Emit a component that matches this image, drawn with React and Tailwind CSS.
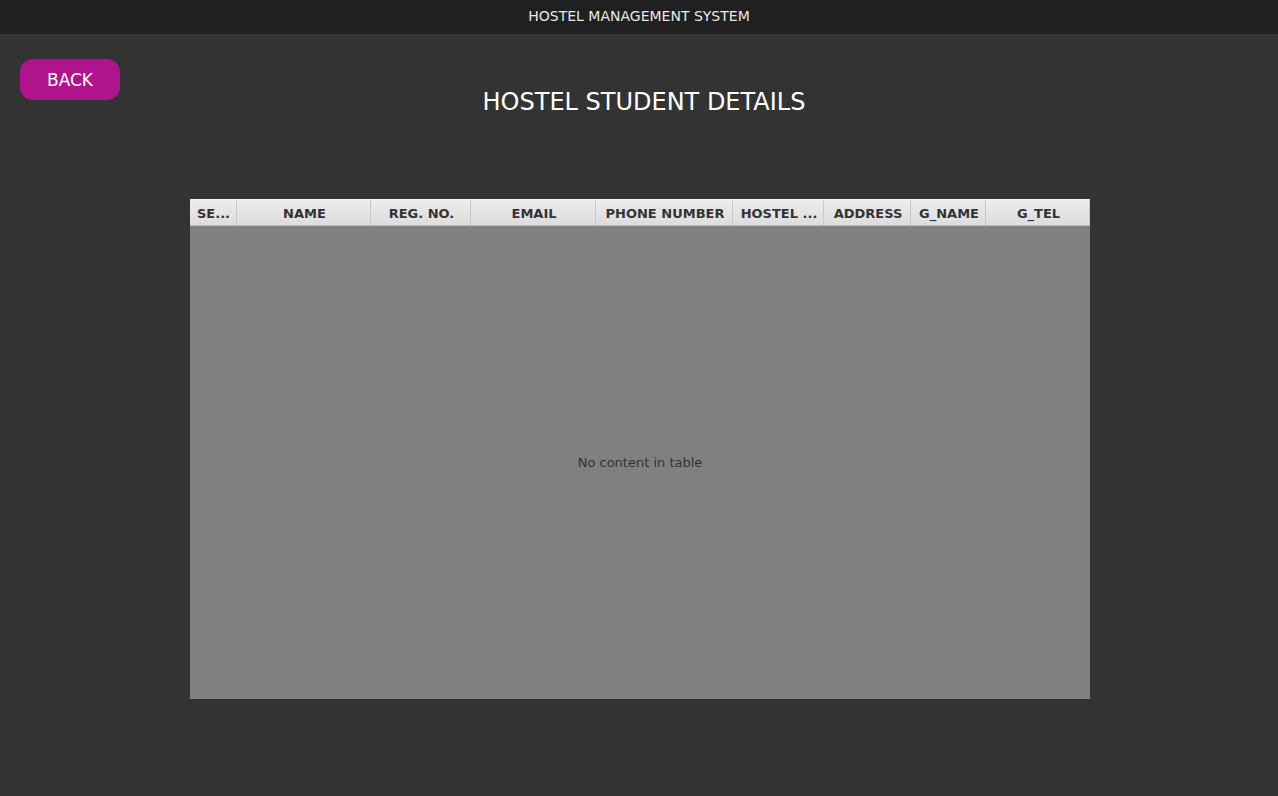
const columns = [
  { label: "SE...", width: "w-[47px]", align: "justify-start pl-[7px]" },
  { label: "NAME", width: "w-[134px]" },
  { label: "REG. NO.", width: "w-[100px]" },
  { label: "EMAIL", width: "w-[125px]" },
  { label: "PHONE NUMBER", width: "w-[137px]" },
  { label: "HOSTEL ...", width: "w-[91px]" },
  { label: "ADDRESS", width: "w-[87px]" },
  { label: "G_NAME", width: "w-[75px]" },
  { label: "G_TEL", width: "w-[104px]" },
];

export default function App() {
  return (
    <div className="w-[1278px] h-[796px] bg-[#333333] flex flex-col font-['DejaVu_Sans',sans-serif]">
      {/* Title bar */}
      <div className="h-[34px] bg-[#202020] flex items-center justify-center text-[14px] text-[#e8e8e8] pb-[2px]">
        HOSTEL MANAGEMENT SYSTEM
      </div>

      {/* Top row */}
      <div className="relative h-[165px]">
        <button className="absolute left-[20px] top-[25px] w-[100px] h-[41px] rounded-[13px] bg-[#b0148c] text-white text-[17px] pt-[2px]">
          BACK
        </button>
        <h1 className="pt-[50px] text-center text-[24px] text-white pl-[10px]">
          HOSTEL STUDENT DETAILS
        </h1>
      </div>

      {/* Table */}
      <div className="ml-[190px] w-[900px] h-[500px] flex flex-col bg-[#808080]">
        <div className="h-[27px] flex border-t border-[#f0f0f0] bg-gradient-to-b from-[#ececec] to-[#dcdcdc]">
          {columns.map((c) => (
            <div
              key={c.label}
              className={`${c.width} h-full flex items-center pt-[2px] ${c.align || "justify-center pl-[2px]"} border-r border-[#c8c8c8] border-b border-b-[#bdbdbd] text-[13px] font-bold text-[#333333] whitespace-nowrap overflow-hidden`}
            >
              {c.label}
            </div>
          ))}
        </div>
        <div className="flex-1 flex items-center justify-center text-[13px] text-[#333333]">
          No content in table
        </div>
      </div>
    </div>
  );
}
